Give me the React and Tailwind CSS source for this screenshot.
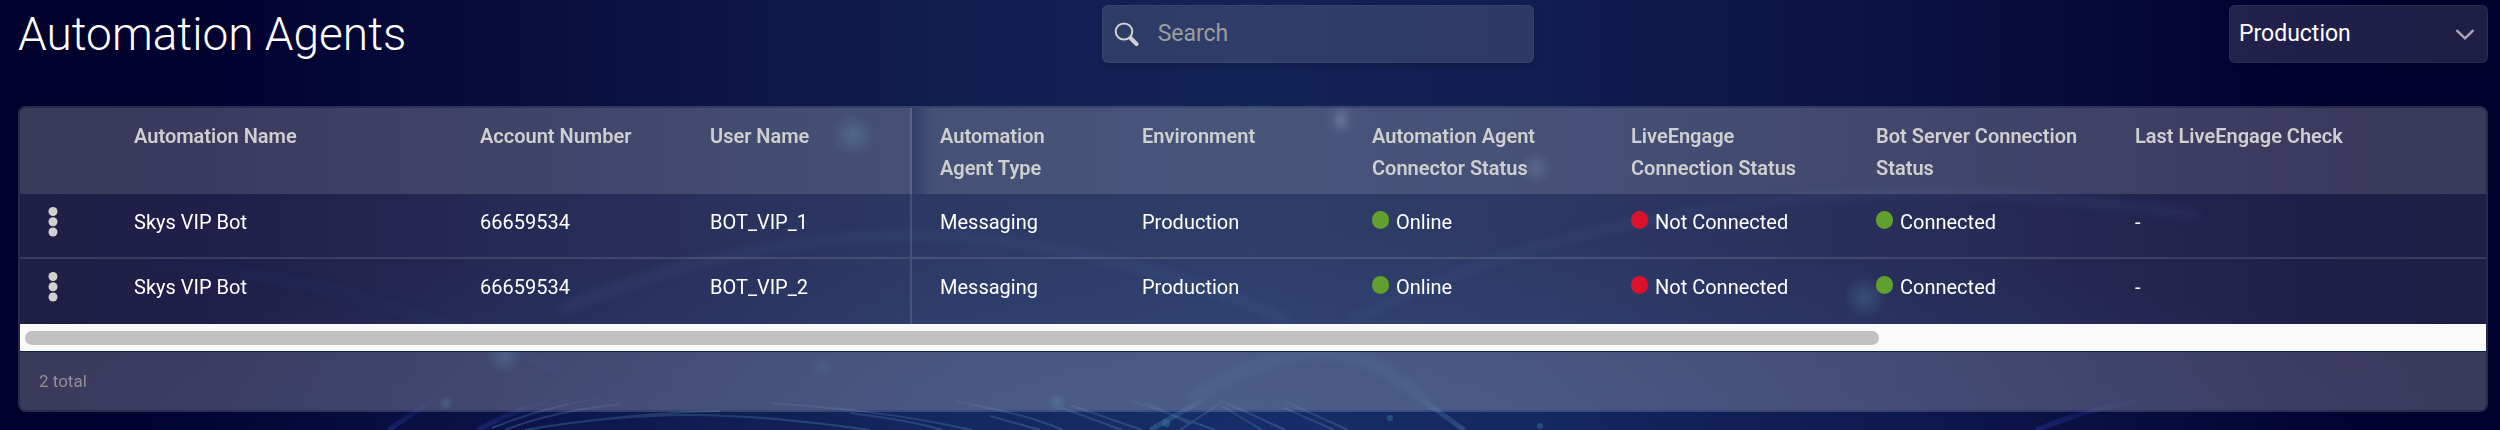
const columns = [
  { label: '', width: 'w-[86px]' },
  { label: 'Automation Name', width: 'w-[346px]' },
  { label: 'Account Number', width: 'w-[230px]' },
  { label: 'User Name', width: 'w-[230px]' },
  { label: 'Automation Agent Type', width: 'w-[202px]' },
  { label: 'Environment', width: 'w-[230px]' },
  { label: 'Automation Agent Connector Status', width: 'w-[259px]' },
  { label: 'LiveEngage Connection Status', width: 'w-[245px]' },
  { label: 'Bot Server Connection Status', width: 'w-[259px]' },
  { label: 'Last LiveEngage Check', width: '' },
];

const agents = [
  { name: 'Skys VIP Bot', account: '66659534', user: 'BOT_VIP_1' },
  { name: 'Skys VIP Bot', account: '66659534', user: 'BOT_VIP_2' },
];

const cell = 'px-7 pt-3 pb-[19px]';

function Status({ ok, children }) {
  return (
    <span className="flex items-baseline gap-[7px]">
      <span className={`h-[18px] w-[17px] rounded-full ${ok ? 'bg-[#60a12d]' : 'bg-[#dc112b]'}`} />
      {children}
    </span>
  );
}

function Backdrop() {
  return (
    <svg
      aria-hidden="true"
      className="absolute inset-0 -z-10 h-full w-full"
      viewBox="0 0 2500 430"
      preserveAspectRatio="xMidYMid slice"
    >
      <defs>
        <linearGradient id="base" x1="0" x2="1" y1="0" y2="0">
          <stop offset="0" stopColor="#00002c" />
          <stop offset="0.08" stopColor="#010130" />
          <stop offset="0.25" stopColor="#0b1142" />
          <stop offset="0.38" stopColor="#101e50" />
          <stop offset="0.5" stopColor="#122355" />
          <stop offset="0.62" stopColor="#101d50" />
          <stop offset="0.76" stopColor="#0b1143" />
          <stop offset="0.92" stopColor="#020130" />
          <stop offset="1" stopColor="#00002c" />
        </linearGradient>
        <radialGradient id="glow" cx="0.5" cy="1" r="0.5">
          <stop offset="0" stopColor="#2350a0" stopOpacity="0.26" />
          <stop offset="1" stopColor="#2350a0" stopOpacity="0" />
        </radialGradient>
        <radialGradient id="teal">
          <stop offset="0" stopColor="#3f86ac" stopOpacity="0.3" />
          <stop offset="1" stopColor="#3f86ac" stopOpacity="0" />
        </radialGradient>
        <radialGradient id="pale">
          <stop offset="0" stopColor="#8ea3cc" stopOpacity="0.2" />
          <stop offset="1" stopColor="#8ea3cc" stopOpacity="0" />
        </radialGradient>
        <filter id="soft" x="-10%" y="-50%" width="120%" height="200%">
          <feGaussianBlur stdDeviation="5" />
        </filter>
        <linearGradient id="fade" x1="0" x2="0" y1="396" y2="430" gradientUnits="userSpaceOnUse">
          <stop offset="0" stopColor="#4b7fae" stopOpacity="0" />
          <stop offset="0.5" stopColor="#4b7fae" stopOpacity="0.3" />
          <stop offset="1" stopColor="#4b7fae" stopOpacity="0.4" />
        </linearGradient>
        <linearGradient id="violet" x1="0" x2="0" y1="396" y2="430" gradientUnits="userSpaceOnUse">
          <stop offset="0" stopColor="#2b3aa0" stopOpacity="0" />
          <stop offset="1" stopColor="#2b3aa0" stopOpacity="0.45" />
        </linearGradient>
      </defs>
      <rect width="2500" height="430" fill="url(#base)" />
      <rect y="30" width="2500" height="400" fill="url(#glow)" />
      <circle cx="853" cy="135" r="22" fill="url(#teal)" />
      <path d="M1331 118a10 12 0 0 1 20 0a10 16 0 0 1-20 0Z" fill="url(#pale)" />
      <circle cx="1341" cy="120" r="18" fill="url(#pale)" opacity="0.7" />
      <circle cx="1536" cy="168" r="17" fill="url(#pale)" />
      <circle cx="1865" cy="297" r="22" fill="url(#teal)" />
      <circle cx="504" cy="356" r="18" fill="url(#teal)" />
      <circle cx="822" cy="367" r="14" fill="url(#teal)" opacity="0.4" />
      <g fill="none" stroke="#3d6ba5" filter="url(#soft)">
        <path d="M560 310C700 250 850 230 950 236S1180 270 1290 322" strokeWidth="8" opacity="0.14" />
        <path d="M1350 322C1450 270 1560 232 1720 208S2000 190 2200 215" strokeWidth="7" opacity="0.14" />
        <path d="M150 265C300 270 420 310 560 370" strokeWidth="6" opacity="0.08" />
        <path d="M1190 400C1290 340 1350 330 1430 405" strokeWidth="12" opacity="0.12" />
      </g>
      <g fill="none" stroke="url(#violet)" strokeWidth="5">
        <path d="M388 430L440 396" />
        <path d="M478 430Q510 412 550 400" />
        <path d="M2036 430Q2090 408 2150 398" />
      </g>
      <g fill="none" stroke="url(#fade)" strokeWidth="2">
        <path d="M492 428Q540 408 600 398M505 430Q550 412 620 404M525 430C640 410 730 410 870 430M580 422C640 414 680 412 720 411" />
        <path d="M770 403C840 408 900 414 972 430M850 413C890 418 920 423 942 430M955 401C1000 410 1030 416 1063 430M990 416L1040 430" />
        <path d="M1070 405L1142 430M1062 408L1122 430M1130 400L1215 430M1145 402L1190 424M1180 430L1222 402M1220 400L1285 430M1222 406L1262 430M1282 400L1348 430M1284 408L1334 430" />
      </g>
      <path d="M1150 430L1206 398" stroke="url(#fade)" strokeWidth="5" />
      <path d="M1420 398L1464 430" stroke="url(#fade)" strokeWidth="5" />
      <g fill="#2e78a0" opacity="0.5">
        <circle cx="1390" cy="418" r="3" />
        <circle cx="1540" cy="426" r="3" />
        <circle cx="1166" cy="423" r="4" />
      </g>
      <circle cx="446" cy="403" r="8" fill="url(#teal)" />
      <circle cx="1057" cy="402" r="10" fill="url(#teal)" />
    </svg>
  );
}

export default function App() {
  return (
    <main className="relative isolate flex min-h-screen flex-col overflow-hidden bg-[#00002c] pr-3 pl-[18px] pt-[5px] font-['Roboto',sans-serif] text-xl leading-8 text-white">
      <Backdrop />
      <header className="flex h-[58px] items-center justify-between">
        <h1 className="text-[46px] leading-[58px] font-light">Automation Agents</h1>
        <label className="flex h-[58px] w-[432px] items-center gap-[18px] rounded-md border border-white/5 bg-white/12 px-[11px] shadow-md">
          <svg aria-hidden="true" className="h-6 w-[26px] shrink-0" viewBox="0 0 26 24" fill="none" stroke="#d0d0d0">
            <ellipse cx="10" cy="9.500" rx="8.300" ry="8" strokeWidth="2" />
            <path d="M16.500 16L22.500 22" strokeWidth="4" strokeLinecap="round" />
          </svg>
          <input
            type="search"
            aria-label="Search"
            placeholder="Search"
            className="min-w-0 flex-1 bg-transparent text-[23px] outline-none placeholder:text-[#9d9d9d]"
          />
        </label>
        <div className="grid h-[58px] w-[259px] items-center rounded-md border border-white/5 bg-white/12 shadow-md">
          <select
            aria-label="Environment"
            className="col-start-1 row-start-1 h-full w-full appearance-none bg-transparent px-[9px] text-[23px] outline-none"
          >
            <option>Production</option>
          </select>
          <svg
            aria-hidden="true"
            className="pointer-events-none col-start-1 row-start-1 mr-3 h-[11px] w-5 justify-self-end"
            viewBox="0 0 20 11"
            fill="none"
            stroke="#a9a9b4"
            strokeWidth="2.4"
          >
            <path d="M1.500 1.200L10 9.300L18.500 1.200" />
          </svg>
        </div>
      </header>

      <section className="mt-[43px] overflow-hidden rounded-lg border-2 border-white/5 bg-white/12">
        <table className="w-full table-fixed border-separate border-spacing-0 text-left">
          <thead className="text-[#cfcfcf]">
            <tr className="align-top">
              {columns.map((column, i) => (
                <th
                  key={i}
                  scope="col"
                  className={`${column.width} bg-white/12 px-7 pt-3 pb-[10px] font-semibold ${i === 3 ? 'border-r-2 border-white/12' : ''} ${i === 4 ? 'bg-linear-to-r from-[#0a1450]/30 to-transparent to-10%' : ''}`}
                >
                  {column.label}
                </th>
              ))}
            </tr>
          </thead>
          <tbody className="[&>tr:first-child>td]:border-b-2 [&>tr>td]:border-white/12">
            {agents.map((agent) => (
              <tr key={agent.user} className="h-[65px] align-top">
                <td className="pt-3">
                  <button type="button" aria-label={`Actions for ${agent.user}`} className="ml-6 block h-8 w-[18px]">
                    <svg aria-hidden="true" className="h-8 w-[18px]" viewBox="0 0 18 32" fill="#d0d0d0">
                      <circle cx="9" cy="5.500" r="4.500" />
                      <circle cx="9" cy="15.700" r="4.500" />
                      <circle cx="9" cy="26" r="4.500" />
                    </svg>
                  </button>
                </td>
                <td className={cell}>{agent.name}</td>
                <td className={cell}>{agent.account}</td>
                <td className={`${cell} border-r-2`}>{agent.user}</td>
                <td className={cell}>Messaging</td>
                <td className={cell}>Production</td>
                <td className={cell}><Status ok>Online</Status></td>
                <td className={cell}><Status>Not Connected</Status></td>
                <td className={cell}><Status ok>Connected</Status></td>
                <td className={cell}>-</td>
              </tr>
            ))}
          </tbody>
        </table>
        <div className="h-[27px] bg-[#fafafa] px-[5px] py-[7px]">
          <div className="h-[14px] w-[75.5%] rounded-full bg-[#c1c1c1]" />
        </div>
        <footer className="flex h-[59px] items-center border-t border-[#08205c] bg-white/12 px-[19px] text-[17px] text-[#8f9096]">
          2 total
        </footer>
      </section>
    </main>
  );
}
